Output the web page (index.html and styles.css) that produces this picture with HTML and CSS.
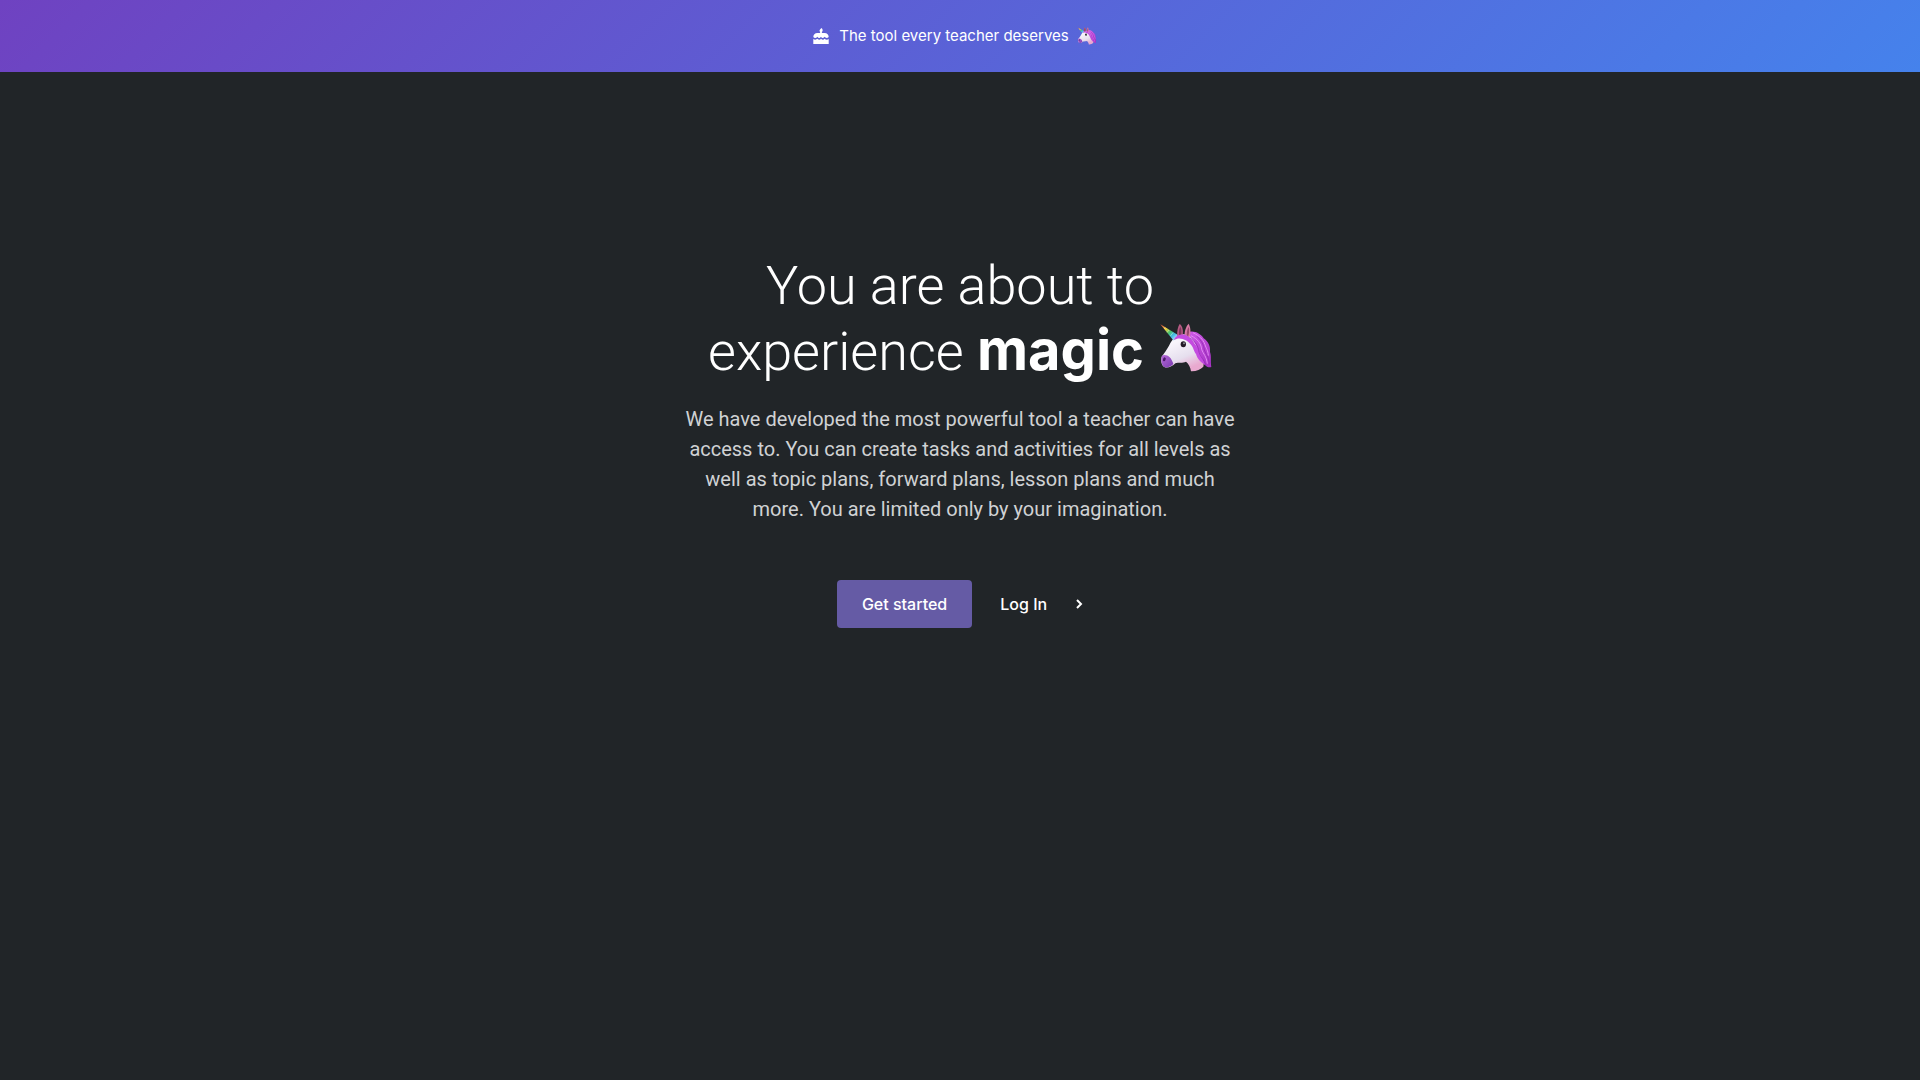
FILE: index.html
```html
<!DOCTYPE html>
<html lang="en">
<head>
  <meta charset="UTF-8" />
  <meta name="viewport" content="width=device-width, initial-scale=1.0"/>
  <title>The tool every teacher deserves</title>
  <link rel="stylesheet" href="styles.css">
</head>
<body>
  <svg class="sprite" aria-hidden="true">
    <defs>
      <linearGradient id="face" x1="0" y1="0" x2="0.5" y2="1">
        <stop offset="0.3" stop-color="#f8f5fb"/>
        <stop offset="0.7" stop-color="#e6dfee"/>
        <stop offset="1" stop-color="#e9a9cf"/>
      </linearGradient>
      <linearGradient id="mane" x1="0" y1="0" x2="1" y2="1">
        <stop offset="0" stop-color="#cf5be8"/>
        <stop offset="1" stop-color="#a632c4"/>
      </linearGradient>
      <linearGradient id="muzzle" x1="0" y1="0" x2="1" y2="1">
        <stop offset="0" stop-color="#b568d8"/>
        <stop offset="1" stop-color="#7a3bb0"/>
      </linearGradient>
      <linearGradient id="horn" x1="0" y1="0" x2="1" y2="1">
        <stop offset="0.05" stop-color="#e8583f"/>
        <stop offset="0.3" stop-color="#f2d33d"/>
        <stop offset="0.5" stop-color="#4cc56a"/>
        <stop offset="0.7" stop-color="#43b9e8"/>
        <stop offset="0.95" stop-color="#ddeeff"/>
      </linearGradient>
    </defs>
    <symbol id="unicorn" viewBox="26 26 156 150">
      <path fill="url(#mane)" d="M108 54C128 47 147 57 157 72C171 82 178 96 176 113C181 126 177 139 180 158C172 161 166 157 160 151L142 132L112 82Z"/>
      <path fill="url(#face)" d="M76 65C88 58 105 58 117 67C130 80 138 100 146 119C152 132 160 144 156 157C148 165 134 172 119 171C117 157 112 149 104 142C94 147 81 143 72 147C63 156 48 163 39 158C30 152 28 139 31 127C38 117 47 105 53 94C59 82 65 72 76 65Z"/>
      <path fill="url(#muzzle)" d="M32 124C45 118 60 128 66 149C58 157 46 162 39 158C30 152 28 137 32 124Z"/>
      <ellipse cx="39" cy="135" rx="4" ry="6" fill="#4c1a6a" transform="rotate(20 39 135)"/>
      <path fill="url(#horn)" d="M27 30L80 62L67 79Z"/>
      <path stroke="#fff" stroke-opacity=".55" stroke-width="2" d="M38 43L43 40M47 54L53 47M57 65L65 55"/>
      <path fill="#b65b83" d="M78 67C76 50 80 37 85 29C94 35 96 49 94 64Z"/>
      <path fill="#7d3a5b" d="M83 61C82 49 84 42 87 37C91 44 91 54 89 63Z"/>
      <path fill="#d77ba4" d="M100 64C99 48 105 35 112 28C119 41 119 58 113 73Z"/>
      <path fill="#97476d" d="M106 62C106 50 109 42 112 37C115 47 113 58 110 67Z"/>
      <path fill="#c44be0" d="M68 77C72 65 86 58 103 62C114 66 123 75 130 88C139 98 143 108 147 120C153 127 155 140 162 152C149 145 138 134 134 119C127 112 127 98 117 89C109 80 101 76 94 74C85 71 76 72 68 77Z"/>
      <path fill="none" stroke="#e38bf3" stroke-width="3" d="M119 64C138 74 149 86 151 105C156 120 165 125 168 148M125 55C144 65 155 74 161 91C164 102 170 107 171 124"/>
      <path fill="none" stroke="#8d24ad" stroke-width="2" d="M116 70C133 84 139 92 143 113C147 128 157 134 164 153M137 66C151 80 157 91 159 107C163 119 173 128 174 151"/>
      <ellipse cx="96" cy="90" rx="8" ry="9" fill="#241c28"/>
      <circle cx="98" cy="87" r="3" fill="#899092"/>
    </symbol>
  </svg>

  <div class="banner">
    <svg class="cake" viewBox="0 0 16 16" fill="currentColor" aria-hidden="true">
      <path d="M8.6 0C10.4 1.8 9.7 4 8 4C6 3.9 5.9 1.9 8.6 0Z"/>
      <path d="M7.1 3.4H8.9V4.9H11.5C14.2 4.9 15.7 6.6 15.7 9.1C13.8 10.8 12.5 9.8 11.6 8.8C10.1 10.6 8.8 10.2 8 8.8C6.7 10.6 5.3 10.2 4.4 8.8C3 10.6 1.3 10.4.3 9.1C.3 6.6 1.8 4.9 4.5 4.9H7.1Z"/>
      <path d="M.3 11.1C2 12.1 3.6 11.6 4.4 10.8C5.8 12.1 7.2 11.8 8 10.8C9.3 12.1 10.8 11.8 11.6 10.8C12.8 11.9 14.3 12.1 15.7 11.1V16H.3Z"/>
    </svg>
    <span>The tool every teacher deserves</span>
    <svg class="unicorn-small" role="img" aria-label="unicorn"><use href="#unicorn"/></svg>
  </div>

  <main class="hero">
    <h1>You are about to<br>experience <strong>magic</strong><svg class="unicorn" role="img" aria-label="unicorn"><use href="#unicorn"/></svg></h1>
    <p>We have developed the most powerful tool a teacher can have access to. You can create tasks and activities for all levels as well as topic plans, forward plans, lesson plans and much more. You are limited only by your imagination.</p>
    <div class="actions">
      <button type="button" class="btn-primary">Get started</button>
      <a class="login" href="#">
        Log In
        <svg class="chevron" viewBox="0 0 8 12" aria-hidden="true"><path d="M2 2L6 6L2 10"/></svg>
      </a>
    </div>
  </main>
</body>
</html>
```

FILE: styles.css
```css
:root {
  --bg-dark: #212528;
  --purple: #655ba5;
  --text-muted: #d0d2d4;
  --font-ui: Inter, "Liberation Sans", sans-serif;
  --font-copy: Roboto, "Liberation Sans", sans-serif;
}

* {
  box-sizing: border-box;
}

body {
  margin: 0;
  font-family: var(--font-ui);
  font-size: 16px;
  line-height: 24px;
  background-color: var(--bg-dark);
  color: #fff;
}

.sprite {
  position: absolute;
  width: 0;
  height: 0;
}

.banner {
  display: flex;
  align-items: center;
  justify-content: center;
  padding: 24px 16px;
  font-size: 15px;
  background: linear-gradient(135deg, #6f42c1, #4582ec);
}

.cake {
  width: 16px;
  height: 16px;
  margin-right: 10px;
}

.unicorn-small {
  width: 20px;
  height: 18px;
  margin: 0 10px 0 8px;
}

.hero {
  max-width: 576px;
  margin: 0 auto;
  padding: 182px 12px 64px;
  text-align: center;
}

h1 {
  margin: 0 0 20px;
  font-family: var(--font-copy);
  font-size: 54px;
  font-weight: 300;
  line-height: 64px;
}

h1 strong {
  font-family: var(--font-ui);
  font-size: 56px;
  font-weight: 700;
}

.unicorn {
  width: 52px;
  height: 50px;
  margin-left: 16px;
  vertical-align: -3px;
}

p {
  margin: 0 0 56px;
  font-family: var(--font-copy);
  font-size: 20px;
  line-height: 30px;
  color: var(--text-muted);
}

.actions {
  display: flex;
  align-items: center;
  justify-content: center;
  gap: 28px;
}

.btn-primary {
  padding: 12px 25px;
  font-family: inherit;
  font-size: 16px;
  font-weight: 500;
  line-height: 24px;
  color: #fff;
  background-color: var(--purple);
  border: none;
  border-radius: 4px;
  cursor: pointer;
}

.login {
  display: flex;
  align-items: center;
  gap: 28px;
  font-weight: 500;
  color: #fff;
  text-decoration: none;
}

.chevron {
  width: 8px;
  height: 12px;
  fill: none;
  stroke: #fff;
  stroke-width: 2;
}
```
